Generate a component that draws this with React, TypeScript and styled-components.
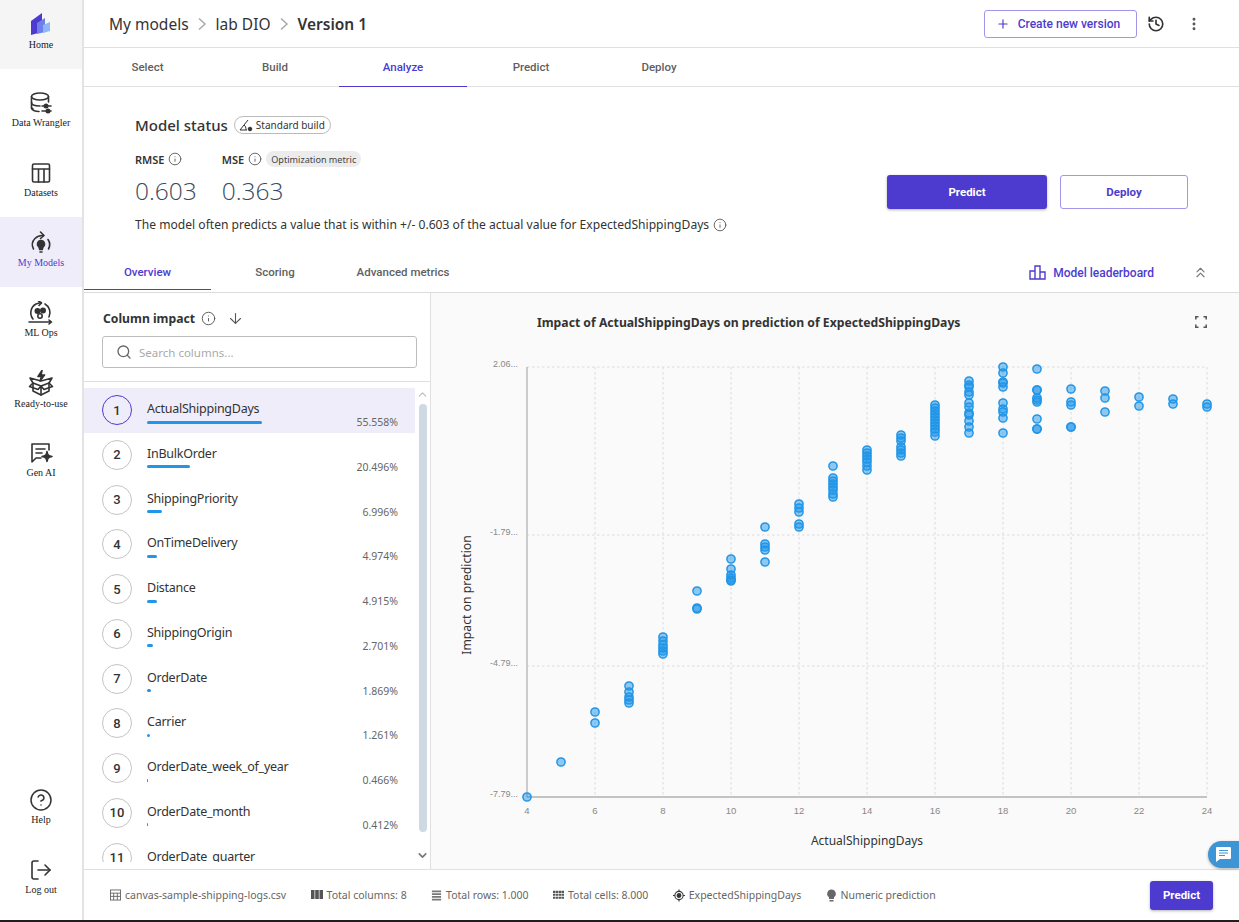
import React from 'react';
import styled, { createGlobalStyle } from 'styled-components';
import { ArrowDown, ChevronDown, ChevronUp, ChevronsUp, CircleHelp, History, Info, LogOut, MoreVertical, Plus, Search } from 'lucide-react';

const body = '"Noto Sans", "Open Sans", sans-serif';
const ui = 'Roboto, "Noto Sans", sans-serif';
const purple = '#4d3bcf';

const GlobalStyle = createGlobalStyle`
	html, body { margin: 0; padding: 0; background: #fff; }
	body { font-family: ${body}; color: #333; overflow: hidden; }
	* { box-sizing: border-box; }
`;

const Page = styled.div`
	width: 1239px;
	height: 922px;
	display: flex;
	flex-direction: column;
	border-bottom: 2px solid #1f1f1f;
	position: relative;
	overflow: hidden;
`;
const Shell = styled.div`
	flex: 1;
	min-height: 0;
	display: flex;
`;
const Sidebar = styled.nav`
	width: 84px;
	flex: none;
	display: flex;
	flex-direction: column;
	padding-bottom: 6px;
	border-right: 2px solid #e3e3e3;
`;
const HomeItem = styled.div`
	height: 69px;
	margin-bottom: 8px;
	background: #f5f5f5;
	display: flex;
	flex-direction: column;
	align-items: center;
	padding-top: 13px;
	gap: 2px;
`;
const NavItem = styled.div<{ $active?: boolean }>`
	height: 70px;
	display: flex;
	flex-direction: column;
	align-items: center;
	justify-content: center;
	padding-bottom: 5px;
	background: ${p => (p.$active ? '#f0edfa' : 'transparent')};
	color: #333;
`;
const NavLabel = styled.span<{ $active?: boolean }>`
	font-family: "Liberation Serif", serif;
	font-size: 10px;
	line-height: 13px;
	margin-top: 1px;
	white-space: nowrap;
	color: ${p => (p.$active ? purple : '#222')};
`;
const NavSpacer = styled.div`
	flex: 1;
`;
const Main = styled.main`
	flex: 1;
	min-width: 0;
	display: flex;
	flex-direction: column;
`;
const TopBar = styled.header`
	height: 48px;
	flex: none;
	display: flex;
	align-items: center;
	padding: 0 26px 0 25px;
	border-bottom: 1px solid #e0e0e0;
`;
const Crumb = styled.span<{ $strong?: boolean }>`
	font-size: 15.5px;
	font-weight: ${p => (p.$strong ? 600 : 400)};
	color: #333;
`;
const CrumbGap = styled.span`
	display: flex;
	align-items: center;
	margin: 0 7.5px;
	color: #aaa;
`;
const TopActions = styled.div`
	margin-left: auto;
	display: flex;
	align-items: center;
`;
const OutlineButton = styled.button`
	height: 28px;
	width: 153px;
	display: flex;
	align-items: center;
	justify-content: center;
	gap: 8px;
	background: #fff;
	border: 1px solid #a197ea;
	border-radius: 3px;
	color: ${purple};
	font-family: ${ui};
	font-size: 12px;
	font-weight: 500;
	padding: 0 5px 0 0;
`;
const IconSlot = styled.span<{ $w: number; $color?: string }>`
	width: ${p => p.$w}px;
	display: flex;
	justify-content: center;
	color: ${p => p.$color || '#333'};
`;
const TabRow = styled.div<{ $h: number }>`
	height: ${p => p.$h}px;
	flex: none;
	display: flex;
	align-items: stretch;
	border-bottom: 1px solid #e0e0e0;
`;
const Tab = styled.div<{ $active?: boolean }>`
	width: 128px;
	display: flex;
	align-items: center;
	justify-content: center;
	font-family: ${ui};
	font-size: 11.5px;
	font-weight: 500;
	color: ${p => (p.$active ? purple : '#5f5f5f')};
	border-bottom: 1px solid ${p => (p.$active ? purple : 'transparent')};
	margin-bottom: -1px;
	&:first-child {
		width: 127px;
	}
`;
const SubTab = styled(Tab)`
	margin-bottom: 2px;
`;
const StatusPanel = styled.section`
	height: 168px;
	flex: none;
	display: flex;
	align-items: flex-start;
	justify-content: space-between;
	padding: 28px 51px 0 51px;
`;
const StatusInfo = styled.div`
	display: flex;
	flex-direction: column;
`;
const StatusTitle = styled.div`
	display: flex;
	align-items: center;
	gap: 6px;
	height: 20px;
	font-size: 15px;
	font-weight: 500;
	color: #333;
`;
const Pill = styled.span`
	height: 18px;
	display: flex;
	align-items: center;
	gap: 3px;
	padding: 0 5px 0 4px;
	border: 1px solid #bbb;
	border-radius: 10px;
	font-size: 10px;
	font-weight: 400;
	color: #333;
`;
const Metrics = styled.div`
	display: flex;
	gap: 25px;
	margin-top: 15px;
`;
const Metric = styled.div`
	display: flex;
	flex-direction: column;
`;
const MetricLabel = styled.div`
	display: flex;
	align-items: center;
	gap: 4px;
	height: 18px;
	font-size: 11px;
	font-weight: 600;
	color: #333;
`;
const Tag = styled.span`
	height: 16px;
	display: flex;
	align-items: center;
	padding: 0 5px;
	border-radius: 8px;
	background: #ececec;
	font-size: 9.1px;
	font-weight: 400;
	color: #444;
`;
const MetricValue = styled.div`
	font-family: "Open Sans", sans-serif;
	font-size: 24.5px;
	font-weight: 300;
	line-height: 32px;
	margin-top: 7px;
	color: #3a4a5c;
`;
const Sentence = styled.div`
	display: flex;
	align-items: center;
	gap: 4px;
	font-size: 12.1px;
	line-height: 18px;
	margin-top: 9px;
	color: #333;
	white-space: nowrap;
`;
const StatusButtons = styled.div`
	display: flex;
	gap: 13px;
	margin-top: 60px;
`;
const SolidButton = styled.button<{ $w: number; $h: number }>`
	width: ${p => p.$w}px;
	height: ${p => p.$h}px;
	background: ${purple};
	border: 0;
	border-radius: 3px;
	color: #fff;
	font-family: ${ui};
	font-size: 11.5px;
	font-weight: 700;
	box-shadow: 0 1px 3px rgba(0, 0, 0, .3);
	padding: 0;
`;
const DeployButton = styled(OutlineButton)`
	width: 128px;
	height: 34px;
	font-size: 11.5px;
	font-weight: 700;
	padding: 0;
`;
const SubTabs = styled(TabRow)`
	padding-right: 30px;
	border-bottom-color: #dcdcdc;
`;
const Leaderboard = styled.div`
	margin-left: auto;
	margin-bottom: 2px;
	display: flex;
	align-items: center;
	gap: 7px;
	font-family: ${ui};
	font-size: 12px;
	font-weight: 500;
	color: ${purple};
`;
const Collapse = styled.span`
	margin-left: 31px;
	display: flex;
	align-items: center;
	color: #777;
`;
const Split = styled.div`
	flex: 1;
	min-height: 0;
	display: flex;
`;
const ColumnPanel = styled.aside`
	width: 347px;
	flex: none;
	display: flex;
	flex-direction: column;
	border-right: 1px solid #e0e0e0;
`;
const ColumnHead = styled.div`
	height: 89px;
	flex: none;
	padding: 15px 13px 0 18px;
	border-bottom: 1px solid #e0e0e0;
`;
const ColumnTitle = styled.div`
	display: flex;
	align-items: center;
	height: 20px;
	padding-left: 1px;
	font-size: 12.2px;
	font-weight: 700;
	color: #333;
`;
const TitleIcon = styled.span<{ $ml: number }>`
	display: flex;
	margin-left: ${p => p.$ml}px;
	color: #555;
`;
const SearchBox = styled.div`
	height: 32px;
	margin-top: 8px;
	display: flex;
	align-items: center;
	gap: 7px;
	padding: 0 13px;
	border: 1px solid #bdbdbd;
	border-radius: 3px;
	color: #666;
`;
const SearchHint = styled.span`
	font-size: 11.5px;
	color: #aaa;
`;
const ListArea = styled.div`
	flex: 1;
	min-height: 0;
	display: flex;
`;
const List = styled.div`
	width: 331px;
	flex: none;
	overflow: hidden;
	padding-top: 6px;
	margin-bottom: 7px;
`;
const Row = styled.div<{ $active?: boolean }>`
	height: 44.75px;
	display: flex;
	align-items: flex-start;
	padding: 7px 17px 0 18px;
	background: ${p => (p.$active ? '#f0edfa' : 'transparent')};
`;
const Rank = styled.span<{ $active?: boolean }>`
	width: 30px;
	height: 30px;
	flex: none;
	display: flex;
	align-items: center;
	justify-content: center;
	border-radius: 50%;
	border: 1px solid ${p => (p.$active ? purple : '#c4c4c4')};
	font-family: ${ui};
	font-size: 13px;
	font-weight: 500;
	color: #333;
`;
const RowBody = styled.div`
	flex: 1;
	margin-left: 15px;
	display: flex;
	flex-direction: column;
`;
const RowName = styled.div`
	font-size: 12.5px;
	letter-spacing: -.25px;
	line-height: 16px;
	margin-top: 6px;
	color: #333;
	white-space: nowrap;
`;
const RowMeter = styled.div`
	display: flex;
	align-items: center;
	justify-content: space-between;
	height: 14px;
	margin-top: -2px;
`;
const Bar = styled.div`
	height: 3px;
	min-width: 1px;
	background: #2196e8;
	border-radius: 2px;
`;
const Percent = styled.span`
	font-size: 10.5px;
	line-height: 14px;
	color: #666;
`;
const Rail = styled.div`
	width: 15px;
	flex: none;
	display: flex;
	flex-direction: column;
	align-items: center;
	padding: 6px 0 7px;
	color: #777;
`;
const RailUp = styled.span`
	display: flex;
	color: #bbb;
`;
const Thumb = styled.div`
	width: 8px;
	height: 428px;
	margin: 3px 0 auto;
	background: #cfd9e3;
	border-radius: 4px;
`;
const ChartPanel = styled.section`
	flex: 1;
	min-width: 0;
	display: flex;
	flex-direction: column;
	background: #fafafa;
`;
const ChartHead = styled.div`
	height: 52px;
	flex: none;
	display: flex;
	align-items: center;
	justify-content: space-between;
	padding: 6px 32px 0 106px;
`;
const ChartTitle = styled.div`
	font-size: 12.2px;
	font-weight: 700;
	color: #333;
`;
const ChartCanvas = styled.svg`
	display: block;
	width: 808px;
	height: 524px;
`;
const Footer = styled.footer`
	height: 51px;
	flex: none;
	display: flex;
	align-items: center;
	gap: 24.4px;
	padding: 0 26px 0 26px;
	border-top: 1px solid #e0e0e0;
`;
const FootItem = styled.span`
	display: flex;
	align-items: center;
	gap: 4px;
	font-size: 10.5px;
	color: #666;
	white-space: nowrap;
`;
const FootPredict = styled(SolidButton)`
	margin-left: auto;
`;
const ChatBubble = styled.div`
	position: absolute;
	right: 0;
	top: 841px;
	width: 31px;
	height: 27px;
	display: flex;
	align-items: center;
	justify-content: center;
	background: #3d95d6;
	border-radius: 14px 0 0 14px;
	box-shadow: 0 1px 3px rgba(0, 0, 0, .3);
`;

const HomeLogo = () => (
	<svg width='20' height='22' viewBox='0 0 20 22'>
		<path d='M0 8 L11 0 V19 L0 22 Z' fill='#4d3bcf' />
		<path d='M6 10 L14 5 V19 L6 21 Z' fill='#6f7fea' />
		<path d='M12 12 L19 9 V18 L12 20 Z' fill='#8fb6fa' />
	</svg>
);
const stroke = { fill: 'none', stroke: '#333', strokeWidth: 1.6, strokeLinecap: 'round' as const, strokeLinejoin: 'round' as const };
const WranglerIcon = () => (
	<svg width='24' height='24' viewBox='0 0 24 24' {...stroke}>
		<ellipse cx='11' cy='5.5' rx='8.5' ry='3.5' />
		<path d='M2.5 5.5 V17 C2.5 19 6 20.5 10 20.5' />
		<path d='M2.5 11.5 C2.5 13.5 6 15 11 15 M19.5 5.5 V11 M2.5 17 L4 18' />
		<path d='M13 15 H22 M13 20 H22' />
		<circle cx='17' cy='15' r='1.7' fill='#333' />
		<circle cx='19' cy='20' r='1.7' fill='#333' />
	</svg>
);
const DatasetIcon = () => (
	<svg width='24' height='24' viewBox='0 0 24 24' {...stroke}>
		<rect x='3.5' y='3' width='17' height='18' rx='1.5' />
		<path d='M3.5 8 H20.5 M9.5 8 V21 M15 8 V21' />
	</svg>
);
const ModelsIcon = () => (
	<svg width='24' height='24' viewBox='0 0 24 24' {...stroke}>
		<path d='M4.5 18 A9 9 0 0 1 6 7.5 C8.5 5 11 4.2 14.5 4.5' />
		<path d='M11.5 1 L15 4.5 L11.5 7.5' />
		<path d='M19 8.5 A9 9 0 0 1 19.5 18' />
		<path d='M12 9.5 A3.6 3.6 0 0 1 14 16 L13.2 18.5 H10.8 L10 16 A3.6 3.6 0 0 1 12 9.5 Z' fill='#333' />
		<path d='M11 21 H13' />
	</svg>
);
const OpsIcon = () => (
	<svg width='26' height='24' viewBox='0 0 26 24' {...stroke}>
		<path d='M5 18 A10 10 0 0 1 8 3 L13 1.5' />
		<path d='M10.5 0 L13.5 2 L11 4.5' />
		<path d='M17 3 A10 10 0 0 1 21 16' />
		<circle cx='9.5' cy='10' r='2.2' fill='#333' />
		<circle cx='15' cy='9.5' r='2.2' fill='#333' />
		<circle cx='12' cy='15' r='2.2' />
		<path d='M1 21 H23 M21 19 L23.5 21 L21 23' />
	</svg>
);
const ReadyIcon = () => (
	<svg width='26' height='26' viewBox='0 0 26 26' {...stroke}>
		<path d='M14 0.5 L10 6.5 H13.5 L12 11 L16.5 5 H13 Z' fill='#333' />
		<path d='M13 11 L2 8 L5 13 V21 L13 25 L21 21 V13 L24 8 Z' />
		<path d='M5 13 L13 16 L21 13 M13 16 V25 M13 16 L10 19.5 L1.5 16.5 L5 13 M13 16 L16 19.5 L24.5 16.5 L21 13' />
	</svg>
);
const GenIcon = () => (
	<svg width='24' height='24' viewBox='0 0 24 24' {...stroke}>
		<path d='M13 3 H3 V21 L7 17 H12 M20 3 V9 M13 3 H20' />
		<path d='M7 8 H16 M7 12 H13' />
		<path d='M18 10.5 C18.5 14 19.5 15 23 15.5 C19.5 16 18.5 17 18 20.5 C17.5 17 16.5 16 13 15.5 C16.5 15 17.5 14 18 10.5 Z' fill='#333' />
	</svg>
);
const BuildIcon = () => (
	<svg width='14' height='13' viewBox='0 0 14 13' fill='none' stroke='#333' strokeWidth='1'>
		<path d='M9 1 L1 11 H8' />
		<path d='M5 6 C6.5 7 7 8.5 7 11' />
		<circle cx='11' cy='10' r='1.8' fill='#333' />
	</svg>
);
const BoardIcon = () => (
	<svg width='17' height='15' viewBox='0 0 17 15' fill='none' stroke={purple} strokeWidth='1.4'>
		<path d='M1 14 V6 H6 V14 Z M6 14 V1 H11 V14 Z M11 14 V7 H16 V14 Z' />
	</svg>
);
const ExpandIcon = () => (
	<svg width='12' height='12' viewBox='0 0 12 12' fill='none' stroke='#555' strokeWidth='1.5'>
		<path d='M.8 3.5 V.8 H3.5 M8.5 .8 H11.2 V3.5 M11.2 8.5 V11.2 H8.5 M3.5 11.2 H.8 V8.5' />
	</svg>
);
const FileIcon = () => (
	<svg width='11' height='12' viewBox='0 0 12 12' fill='none' stroke='#666' strokeWidth='1'>
		<rect x='.5' y='.5' width='11' height='11' />
		<path d='M.5 4 H11.5 M.5 7.5 H11.5 M4 4 V11.5 M8 4 V11.5' />
	</svg>
);
const ColumnsIcon = () => (
	<svg width='12' height='12' viewBox='0 0 12 12' fill='#555'>
		<path d='M0 1 H3.5 V10 H0 Z M4.2 1 H7.8 V10 H4.2 Z M8.5 1 H12 V10 H8.5 Z' />
	</svg>
);
const RowsIcon = () => (
	<svg width='11' height='12' viewBox='0 0 12 12' fill='#777'>
		<path d='M1 1 H11 V3 H1 Z M1 4 H11 V6 H1 Z M1 7 H11 V9 H1 Z M1 10 H11 V12 H1 Z' />
	</svg>
);
const CellsIcon = () => (
	<svg width='11' height='12' viewBox='0 0 13 12' fill='#555'>
		<path d='M0 1 H3 V3.5 H0 Z M3.6 1 H6.4 V3.5 H3.6 Z M7 1 H10 V3.5 H7 Z M10.5 1 H13 V3.5 H10.5 Z M0 4.5 H3 V7 H0 Z M3.6 4.5 H6.4 V7 H3.6 Z M7 4.5 H10 V7 H7 Z M10.5 4.5 H13 V7 H10.5 Z M0 8 H3 V10.5 H0 Z M3.6 8 H6.4 V10.5 H3.6 Z M7 8 H10 V10.5 H7 Z M10.5 8 H13 V10.5 H10.5 Z' />
	</svg>
);
const TargetIcon = () => (
	<svg width='12' height='13' viewBox='0 0 13 13' fill='none' stroke='#333' strokeWidth='1.2'>
		<circle cx='6.5' cy='6.5' r='4.5' />
		<circle cx='6.5' cy='6.5' r='2' fill='#333' />
		<path d='M6.5 0 V2 M6.5 11 V13 M0 6.5 H2 M11 6.5 H13' />
	</svg>
);
const BulbIcon = () => (
	<svg width='11' height='13' viewBox='0 0 11 13' fill='#666'>
		<path d='M5.5 .5 A4.3 4.3 0 0 1 8 8.3 V10 H3 V8.3 A4.3 4.3 0 0 1 5.5 .5 Z' />
		<rect x='3.5' y='11' width='4' height='1.5' />
	</svg>
);
const ChatIcon = () => (
	<svg width='17' height='17' viewBox='0 0 17 17'>
		<path d='M2 1 H15 A1 1 0 0 1 16 2 V12 A1 1 0 0 1 15 13 H5 L1 16 V2 A1 1 0 0 1 2 1 Z' fill='#fff' />
		<path d='M4 4.5 H13 M4 7 H13 M4 9.5 H10' stroke='#3d95d6' strokeWidth='1.2' />
	</svg>
);
const CrumbChevron = () => (
	<svg width='12' height='14' viewBox='0 0 12 14' fill='none' stroke='#aaa' strokeWidth='1.5'><path d='M3 1.5 L9 7 L3 12.5' /></svg>
);

const navItems = [
	{ label: 'Data Wrangler', icon: <WranglerIcon /> },
	{ label: 'Datasets', icon: <DatasetIcon /> },
	{ label: 'My Models', icon: <ModelsIcon />, active: true },
	{ label: 'ML Ops', icon: <OpsIcon /> },
	{ label: 'Ready-to-use', icon: <ReadyIcon /> },
	{ label: 'Gen AI', icon: <GenIcon /> }
];

const columns: [string, number, string][] = [
	['ActualShippingDays', 115, '55.558%'],
	['InBulkOrder', 43, '20.496%'],
	['ShippingPriority', 15, '6.996%'],
	['OnTimeDelivery', 10, '4.974%'],
	['Distance', 10, '4.915%'],
	['ShippingOrigin', 6, '2.701%'],
	['OrderDate', 4, '1.869%'],
	['Carrier', 3, '1.261%'],
	['OrderDate_week_of_year', 1, '0.466%'],
	['OrderDate_month', 1, '0.412%'],
	['OrderDate_quarter', 0, '']
];

// y pixel positions read per x value
const points: [number, number[]][] = [
	[4, [797]],
	[5, [762]],
	[6, [712, 723]],
	[7, [686, 692, 697, 700, 703]],
	[8, [637, 641, 645, 648, 651, 654]],
	[9, [591, 608, 609]],
	[10, [559, 569, 575, 578, 580, 581]],
	[11, [527, 544, 547, 550, 562]],
	[12, [504, 508, 512, 524, 527]],
	[13, [466, 478, 481, 484, 487, 490, 494, 497]],
	[14, [450, 453, 456, 459, 462, 466, 470]],
	[15, [435, 438, 441, 447, 450, 453, 456]],
	[16, [405, 408, 411, 414, 417, 420, 423, 426, 429, 432, 436]],
	[17, [381, 385, 387, 392, 395, 403, 407, 413, 415, 421, 427, 433]],
	[18, [367, 373, 382, 383, 387, 403, 409, 412, 418, 433]],
	[19, [369, 390, 390, 398, 400, 402, 419, 429, 429]],
	[20, [389, 402, 405, 427, 427]],
	[21, [391, 398, 412]],
	[22, [397, 406]],
	[23, [399, 404]],
	[24, [404, 407]]
];
const xOf = (v: number) => 527 + (v - 4) * 34;
const xTicks = [4, 6, 8, 10, 12, 14, 16, 18, 20, 22, 24];
const yTicks: [string, number][] = [['2.06...', 367], ['-1.79...', 535], ['-4.79...', 666], ['-7.79...', 797]];

const Chart = () => (
	<ChartCanvas viewBox='431 345 808 524'>
		{xTicks.slice(1).map(t => <line key={t} x1={xOf(t)} x2={xOf(t)} y1={367} y2={797} stroke='#e0e0e0' strokeWidth='1.2' strokeDasharray='2.5 2.5' />)}
		{yTicks.slice(0, 3).map(([l, y]) => <line key={l} x1={527} x2={1207} y1={y} y2={y} stroke='#dcdcdc' strokeWidth='1' strokeDasharray='2.5 2.5' />)}
		<line x1={527} x2={527} y1={367} y2={797} stroke='#bbb' strokeWidth='1.5' />
		<line x1={527} x2={1207} y1={797} y2={797} stroke='#8c8c8c' strokeWidth='1' />
		{yTicks.map(([l, y]) => <text key={l} x={518} y={y} textAnchor='end' fontFamily='"Liberation Sans", sans-serif' fontSize='9' fill='#888'>{l}</text>)}
		{xTicks.map(t => <text key={t} x={xOf(t)} y={814} textAnchor='middle' fontFamily='"Liberation Sans", sans-serif' fontSize='9.5' fill='#888'>{t}</text>)}
		{points.map(([x, ys]) => ys.map((y, i) => (
			<circle key={`${x}-${i}`} cx={xOf(x)} cy={y} r='4.1' fill='#2196e8' fillOpacity='.5' stroke='#2196e8' strokeWidth='1.5' />
		)))}
		<text x={867} y={845} textAnchor='middle' fontFamily={body} fontSize='12' fill='#333'>ActualShippingDays</text>
		<text transform='translate(471 595) rotate(-90)' textAnchor='middle' fontFamily={body} fontSize='12.2' fill='#333'>Impact on prediction</text>
	</ChartCanvas>
);

const App = () => {
	return <Page>
		<GlobalStyle />
		<Shell>
			<Sidebar>
				<HomeItem>
					<HomeLogo />
					<NavLabel>Home</NavLabel>
				</HomeItem>
				{navItems.map(item => (
					<NavItem key={item.label} $active={item.active}>
						{item.icon}
						<NavLabel $active={item.active}>{item.label}</NavLabel>
					</NavItem>
				))}
				<NavSpacer />
				<NavItem>
					<CircleHelp size={24} strokeWidth={1.5} />
					<NavLabel>Help</NavLabel>
				</NavItem>
				<NavItem>
					<LogOut size={24} strokeWidth={1.6} />
					<NavLabel>Log out</NavLabel>
				</NavItem>
			</Sidebar>
			<Main>
				<TopBar>
					<Crumb>My models</Crumb>
					<CrumbGap><CrumbChevron /></CrumbGap>
					<Crumb>lab DIO</Crumb>
					<CrumbGap><CrumbChevron /></CrumbGap>
					<Crumb $strong>Version 1</Crumb>
					<TopActions>
						<OutlineButton><Plus size={14} />Create new version</OutlineButton>
						<IconSlot $w={38}><History size={18} strokeWidth={2.2} /></IconSlot>
						<IconSlot $w={38} $color='#555'><MoreVertical size={16} strokeWidth={2.4} /></IconSlot>
					</TopActions>
				</TopBar>
				<TabRow $h={39}>
					<Tab>Select</Tab>
					<Tab>Build</Tab>
					<Tab $active>Analyze</Tab>
					<Tab>Predict</Tab>
					<Tab>Deploy</Tab>
				</TabRow>
				<StatusPanel>
					<StatusInfo>
						<StatusTitle>
							Model status
							<Pill><BuildIcon />Standard build</Pill>
						</StatusTitle>
						<Metrics>
							<Metric>
								<MetricLabel>RMSE <Info size={14} strokeWidth={1.5} color='#555' /></MetricLabel>
								<MetricValue>0.603</MetricValue>
							</Metric>
							<Metric>
								<MetricLabel>MSE <Info size={14} strokeWidth={1.5} color='#555' /><Tag>Optimization metric</Tag></MetricLabel>
								<MetricValue>0.363</MetricValue>
							</Metric>
						</Metrics>
						<Sentence>
							The model often predicts a value that is within +/- 0.603 of the actual value for ExpectedShippingDays
							<Info size={14} strokeWidth={1.5} color='#555' />
						</Sentence>
					</StatusInfo>
					<StatusButtons>
						<SolidButton $w={160} $h={34}>Predict</SolidButton>
						<DeployButton>Deploy</DeployButton>
					</StatusButtons>
				</StatusPanel>
				<SubTabs $h={38}>
					<SubTab $active>Overview</SubTab>
					<SubTab>Scoring</SubTab>
					<SubTab>Advanced metrics</SubTab>
					<Leaderboard>
						<BoardIcon />
						Model leaderboard
						<Collapse><ChevronsUp size={17} strokeWidth={1.6} /></Collapse>
					</Leaderboard>
				</SubTabs>
				<Split>
					<ColumnPanel>
						<ColumnHead>
							<ColumnTitle>
								Column impact
								<TitleIcon $ml={6}><Info size={15} strokeWidth={1.5} /></TitleIcon>
								<TitleIcon $ml={11}><ArrowDown size={17} strokeWidth={1.5} /></TitleIcon>
							</ColumnTitle>
							<SearchBox>
								<Search size={16} />
								<SearchHint>Search columns...</SearchHint>
							</SearchBox>
						</ColumnHead>
						<ListArea>
							<List>
								{columns.map(([name, width, pct], i) => (
									<Row key={name} $active={i === 0}>
										<Rank $active={i === 0}>{i + 1}</Rank>
										<RowBody>
											<RowName>{name}</RowName>
											{pct && <RowMeter>
												<Bar style={{ width }} />
												<Percent>{pct}</Percent>
											</RowMeter>}
										</RowBody>
									</Row>
								))}
							</List>
							<Rail>
								<RailUp><ChevronUp size={13} /></RailUp>
								<Thumb />
								<ChevronDown size={13} strokeWidth={3} />
							</Rail>
						</ListArea>
					</ColumnPanel>
					<ChartPanel>
						<ChartHead>
							<ChartTitle>Impact of ActualShippingDays on prediction of ExpectedShippingDays</ChartTitle>
							<ExpandIcon />
						</ChartHead>
						<Chart />
					</ChartPanel>
				</Split>
				<Footer>
					<FootItem><FileIcon />canvas-sample-shipping-logs.csv</FootItem>
					<FootItem><ColumnsIcon />Total columns: 8</FootItem>
					<FootItem><RowsIcon />Total rows: 1.000</FootItem>
					<FootItem><CellsIcon />Total cells: 8.000</FootItem>
					<FootItem><TargetIcon />ExpectedShippingDays</FootItem>
					<FootItem><BulbIcon />Numeric prediction</FootItem>
					<FootPredict $w={63} $h={29}>Predict</FootPredict>
				</Footer>
			</Main>
		</Shell>
		<ChatBubble><ChatIcon /></ChatBubble>
	</Page>;
};

export default App;
